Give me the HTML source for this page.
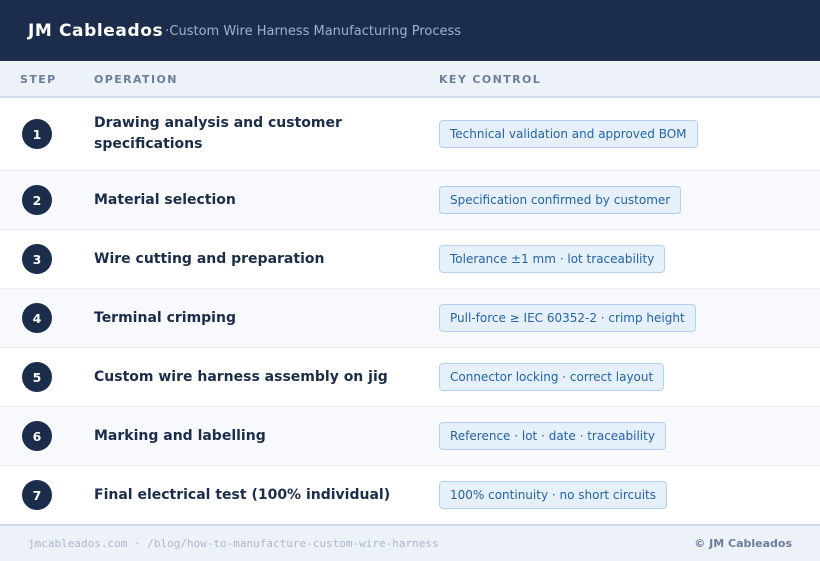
<!DOCTYPE html>
<html><head><meta charset="utf-8"><style>
*{margin:0;padding:0;box-sizing:border-box}
body{width:820px;height:561px;font-family:"DejaVu Sans","Liberation Sans",sans-serif;background:#fff;overflow:hidden}
.hd{height:61px;background:#1b2d4b;display:flex;align-items:center;padding-left:28px}
.hd b{color:#fff;font-size:17px;letter-spacing:0.6px}
.hd span{color:#9fb2cc;font-size:13px;margin-left:2px;position:relative;top:1px}
.th{height:37px;background:#edf1f8;border-bottom:2px solid #cfdbe9;position:relative;font-size:11px;font-weight:bold;color:#6b7f9c;letter-spacing:1.4px}
.th div{position:absolute;top:12px}
.row{position:relative;border-bottom:1px solid #e8edf4}
.row:nth-child(even){background:#f7f9fd}
.c{position:absolute;left:22px;width:30px;height:30px;border-radius:50%;background:#1b2d4b;color:#fff;font-size:12.5px;font-weight:bold;display:flex;align-items:center;justify-content:center}
.op{position:absolute;left:94px;font-size:14px;font-weight:bold;color:#1b2d4b;line-height:21px}
.bd{position:absolute;left:439px;height:28px;padding:0 10px;border:1px solid #b3d1ef;background:#e5f0fb;border-radius:4px;color:#2563a8;font-size:12px;line-height:26px;white-space:nowrap}
.ft{position:absolute;top:524px;left:0;width:820px;height:37px;background:#edf1f8;border-top:2px solid #cfdbe9}
.ft .l{position:absolute;left:28px;top:11px;font-family:"DejaVu Sans Mono","Liberation Mono",monospace;font-size:11px;color:#a9b8cc}
.ft .r{position:absolute;right:28px;top:11px;font-size:11px;font-weight:bold;color:#6b7f9c}
</style></head><body>
<div class="hd"><b>JM Cableados</b><span>·Custom Wire Harness Manufacturing Process</span></div>
<div class="th"><div style="left:20px">STEP</div><div style="left:94px">OPERATION</div><div style="left:439px">KEY CONTROL</div></div>
<div>
<div class="row" style="height:73px"><div class="c" style="top:21px">1</div><div class="op" style="top:15px">Drawing analysis and customer<br>specifications</div><div class="bd" style="top:22px">Technical validation and approved BOM</div></div>
<div class="row" style="height:59px"><div class="c" style="top:14px">2</div><div class="op" style="top:19px">Material selection</div><div class="bd" style="top:15px">Specification confirmed by customer</div></div>
<div class="row" style="height:59px"><div class="c" style="top:14px">3</div><div class="op" style="top:19px">Wire cutting and preparation</div><div class="bd" style="top:15px">Tolerance ±1 mm · lot traceability</div></div>
<div class="row" style="height:59px"><div class="c" style="top:14px">4</div><div class="op" style="top:19px">Terminal crimping</div><div class="bd" style="top:15px">Pull-force ≥ IEC 60352-2 · crimp height</div></div>
<div class="row" style="height:59px"><div class="c" style="top:14px">5</div><div class="op" style="top:19px">Custom wire harness assembly on jig</div><div class="bd" style="top:15px">Connector locking · correct layout</div></div>
<div class="row" style="height:59px"><div class="c" style="top:14px">6</div><div class="op" style="top:19px">Marking and labelling</div><div class="bd" style="top:15px">Reference · lot · date · traceability</div></div>
<div class="row" style="height:58px;border:none"><div class="c" style="top:14px">7</div><div class="op" style="top:19px">Final electrical test (100% individual)</div><div class="bd" style="top:15px">100% continuity · no short circuits</div></div>
</div>
<div class="ft"><div class="l">jmcableados.com · /blog/how-to-manufacture-custom-wire-harness</div><div class="r">© JM Cableados</div></div>
</body></html>
